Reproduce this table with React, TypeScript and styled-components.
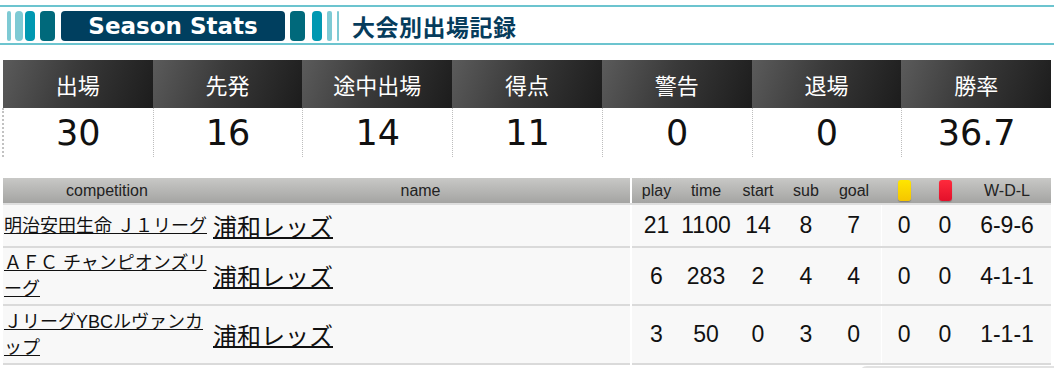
import styled, { createGlobalStyle } from "styled-components";

const GlobalStyle = createGlobalStyle`
  body {
    margin: 0;
    background: #fff;
    font-family: "Liberation Sans", "Noto Sans CJK JP", sans-serif;
  }
`;

const stats = [
  { label: "出場", value: "30" },
  { label: "先発", value: "16" },
  { label: "途中出場", value: "14" },
  { label: "得点", value: "11" },
  { label: "警告", value: "0" },
  { label: "退場", value: "0" },
  { label: "勝率", value: "36.7" },
];

const rows = [
  { comp: "明治安田生命 Ｊ１リーグ", team: "浦和レッズ", nums: ["21", "1100", "14", "8", "7", "0", "0", "6-9-6"], h: 43 },
  { comp: "ＡＦＣ チャンピオンズリーグ", team: "浦和レッズ", nums: ["6", "283", "2", "4", "4", "0", "0", "4-1-1"], h: 58 },
  { comp: "ＪリーグYBCルヴァンカップ", team: "浦和レッズ", nums: ["3", "50", "0", "3", "0", "0", "0", "1-1-1"], h: 59 },
];

// width of every column in the competition table
const colWidths = [208, 420, 50, 50, 54, 42, 54, 46, 36, 88];

const Page = styled.div`
  width: 1054px;
  padding-top: 5px;
`;

const TitleBar = styled.div`
  display: flex;
  align-items: center;
  height: 30px;
  padding: 4px 0 2px 7px;
  border-top: 2px solid #6cc4cf;
  border-bottom: 2px solid #6cc4cf;
`;

const Stripe = styled.span<{ $w: number; $color: string; $gap: number }>`
  display: block;
  width: ${(p) => p.$w}px;
  height: 30px;
  margin-right: ${(p) => p.$gap}px;
  border-radius: ${(p) => (p.$w > 6 ? 4 : 2)}px;
  background: ${(p) => p.$color};
`;

const Badge = styled.div`
  width: 224px;
  height: 30px;
  margin-right: 5px;
  border-radius: 4px;
  background: #003f5f;
  color: #fff;
  font-family: "DejaVu Sans", Verdana, sans-serif;
  font-weight: bold;
  font-size: 23px;
  line-height: 31px;
  text-align: center;
`;

const TitleText = styled.h2`
  margin: 0 0 0 13px;
  color: #063c5c;
  font-family: "Noto Sans CJK JP", sans-serif;
  font-weight: bold;
  font-size: 23px;
  line-height: 30px;
  letter-spacing: 0.5px;
`;

const StatsGrid = styled.div`
  display: grid;
  grid-template-columns: repeat(7, 1fr);
  width: 1048px;
  margin: 15px 0 0 3px;
`;

const StatHead = styled.div`
  height: 48px;
  display: flex;
  align-items: center;
  justify-content: center;
  background: linear-gradient(110deg, #5b5b5b 0%, #3a3a3a 45%, #1c1c1c 100%);
  color: #fff;
  font-family: "Noto Sans CJK JP", sans-serif;
  font-size: 22px;
`;

const StatValue = styled.div<{ $first?: boolean }>`
  height: 49px;
  display: flex;
  align-items: center;
  justify-content: center;
  border-left: ${(p) => (p.$first ? "2px dotted #c2c2c2" : "1px dotted #bdbdbd")};
  margin-left: ${(p) => (p.$first ? "-1px" : "0")};
  color: #111;
  font-family: "DejaVu Sans", Verdana, sans-serif;
  font-size: 35px;
`;

const CompTable = styled.table`
  width: 1048px;
  margin: 21px 0 0 3px;
  border-collapse: collapse;
  table-layout: fixed;
`;

const HeadCell = styled.th<{ $divider?: boolean }>`
  height: 25px;
  padding: 0;
  background: linear-gradient(#c8c8c6, #a4a4a2);
  border-bottom: 2px solid #dedede;
  border-right: ${(p) => (p.$divider ? "2px solid #fff" : "none")};
  color: #222;
  font-weight: normal;
  font-size: 16px;
  text-align: center;
  vertical-align: middle;
`;

const Row = styled.tr<{ $h: number }>`
  height: ${(p) => p.$h}px;
  background: #f8f8f8;
  border-bottom: 2px solid #dadada;
`;

const Cell = styled.td<{ $light?: boolean }>`
  padding: 0;
  text-align: center;
  vertical-align: middle;
  border-left: ${(p) => (p.$light ? "1px solid #fff" : "none")};
  color: #111;
  font-size: 23px;
`;

const CompCell = styled.td`
  padding: 0 0 0 1px;
  vertical-align: middle;
`;

const TeamCell = styled.td`
  padding: 0 0 0 2px;
  vertical-align: middle;
  border-right: 2px solid #fff;
`;

const CompLink = styled.a`
  color: #111;
  font-size: 18px;
  line-height: 26px;
  text-decoration: underline;
`;

const TeamLink = styled.a`
  color: #111;
  font-family: "Noto Sans CJK JP", sans-serif;
  font-size: 24px;
  line-height: 30px;
  text-decoration: underline;
  text-decoration-thickness: 2px;
`;

const Card = styled.span<{ $color: string }>`
  display: inline-block;
  width: 13px;
  height: 21px;
  vertical-align: middle;
  border-radius: 3px;
  background: ${(p) => p.$color};
  box-shadow: 0 1px 1px rgba(0, 0, 0, 0.25);
`;

const BottomTab = styled.div`
  width: 195px;
  height: 8px;
  margin: 1px 0 0 859px;
  border-radius: 12px 0 0 0;
  background: #e2e2e2;
`;

export default function App() {
  return (
    <Page>
      <GlobalStyle />
      <TitleBar>
        <Stripe $w={4} $color="#7ecad4" $gap={4} />
        <Stripe $w={8} $color="#7ecad4" $gap={2} />
        <Stripe $w={10} $color="#0098b1" $gap={5} />
        <Stripe $w={15} $color="#00697b" $gap={6} />
        <Badge>Season Stats</Badge>
        <Stripe $w={15} $color="#00697b" $gap={7} />
        <Stripe $w={10} $color="#0098b1" $gap={5} />
        <Stripe $w={5} $color="#7ecad4" $gap={5} />
        <Stripe $w={2} $color="#7ecad4" $gap={0} />
        <TitleText>大会別出場記録</TitleText>
      </TitleBar>

      <StatsGrid>
        {stats.map((s) => (
          <StatHead key={s.label}>{s.label}</StatHead>
        ))}
        {stats.map((s, i) => (
          <StatValue key={s.label} $first={i === 0}>
            {s.value}
          </StatValue>
        ))}
      </StatsGrid>

      <CompTable>
        <colgroup>
          {colWidths.map((w, i) => (
            <col key={i} style={{ width: w }} />
          ))}
        </colgroup>
        <thead>
          <tr>
            <HeadCell>competition</HeadCell>
            <HeadCell $divider>name</HeadCell>
            <HeadCell>play</HeadCell>
            <HeadCell>time</HeadCell>
            <HeadCell>start</HeadCell>
            <HeadCell>sub</HeadCell>
            <HeadCell>goal</HeadCell>
            <HeadCell>
              <Card $color="linear-gradient(#ffe600, #f5c500)" />
            </HeadCell>
            <HeadCell>
              <Card $color="linear-gradient(#ff2a3c, #e3102a)" />
            </HeadCell>
            <HeadCell>W-D-L</HeadCell>
          </tr>
        </thead>
        <tbody>
          {rows.map((r) => (
            <Row key={r.comp} $h={r.h}>
              <CompCell>
                <CompLink href="#">{r.comp}</CompLink>
              </CompCell>
              <TeamCell>
                <TeamLink href="#">{r.team}</TeamLink>
              </TeamCell>
              {r.nums.map((n, i) => (
                <Cell key={i} $light={i === 5}>
                  {n}
                </Cell>
              ))}
            </Row>
          ))}
        </tbody>
      </CompTable>
      <BottomTab />
    </Page>
  );
}
